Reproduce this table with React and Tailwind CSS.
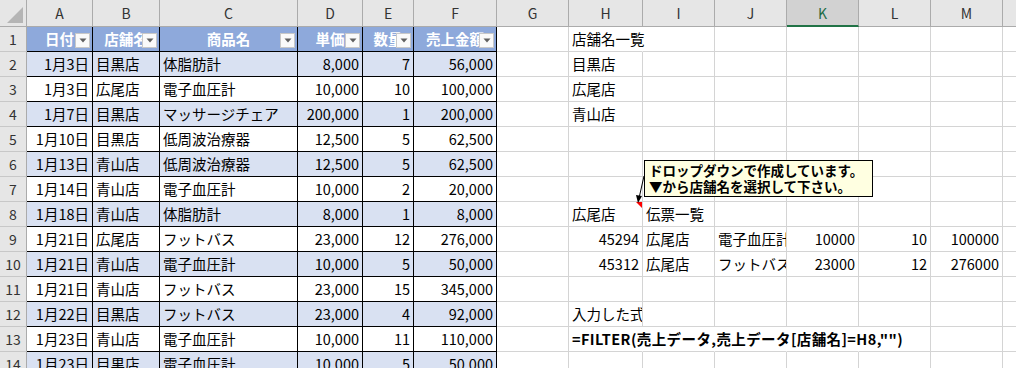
import React from 'react';

const COLS = ['A','B','C','D','E','F','G','H','I','J','K','L','M','N'];

const DATA = [
  ['1月3日','目黒店','体脂肪計','8,000','7','56,000'],
  ['1月3日','広尾店','電子血圧計','10,000','10','100,000'],
  ['1月7日','目黒店','マッサージチェア','200,000','1','200,000'],
  ['1月10日','目黒店','低周波治療器','12,500','5','62,500'],
  ['1月13日','青山店','低周波治療器','12,500','5','62,500'],
  ['1月14日','青山店','電子血圧計','10,000','2','20,000'],
  ['1月18日','青山店','体脂肪計','8,000','1','8,000'],
  ['1月21日','広尾店','フットバス','23,000','12','276,000'],
  ['1月21日','青山店','電子血圧計','10,000','5','50,000'],
  ['1月21日','青山店','フットバス','23,000','15','345,000'],
  ['1月22日','目黒店','フットバス','23,000','4','92,000'],
  ['1月23日','青山店','電子血圧計','10,000','11','110,000'],
  ['1月23日','目黒店','電子血圧計','10,000','5','50,000'],
];

const HEADERS = ['日付','店舗名','商品名','単価','数量','売上金額'];
const NUMERIC = [true, false, false, true, true, true];

// right side cells: [text, align('l'|'r'), bold, overflow]
const SIDE = {
  H1: ['店舗名一覧','l',false,true],
  H2: ['目黒店','l'],
  H3: ['広尾店','l'],
  H4: ['青山店','l'],
  H8: ['広尾店','l'],
  I8: ['伝票一覧','l'],
  H9: ['45294','r'],
  I9: ['広尾店','l'],
  J9: ['電子血圧計','l'],
  K9: ['10000','r'],
  L9: ['10','r'],
  M9: ['100000','r'],
  H10: ['45312','r'],
  I10: ['広尾店','l'],
  J10: ['フットバス','l'],
  K10: ['23000','r'],
  L10: ['12','r'],
  M10: ['276000','r'],
  H12: ['入力した式','l'],
  H13: ['=FILTER(売上データ,売上データ[店舗名]=H8,"")','l',true,true],
};

// cells whose right gridline is hidden by overflowing text
const HIDE_RIGHT = new Set(['H1','H13','I13','J13','K13']);

function FilterButton() {
  return (
    <span className="absolute right-[2px] bottom-[3px] w-[15px] h-[15px] bg-[#fafafa] border border-[#c8c8c8] flex items-center justify-center">
      <svg width="8" height="5" viewBox="0 0 8 5"><path d="M0.5 0.5 L7.5 0.5 L4 4.5 Z" fill="#606060" /></svg>
    </span>
  );
}

function ColumnHeader({ letter }) {
  if (letter === 'K') {
    return (
      <div className="flex items-center justify-center bg-[#d2d2d2] border-r border-[#ababab] border-b-2 border-b-[#217346] text-[#1d6b45] text-[14px]">
        {letter}
      </div>
    );
  }
  return (
    <div className="flex items-center justify-center bg-[#e6e6e6] border-r border-b border-[#ababab] text-[#333333] text-[14px]">
      {letter}
    </div>
  );
}

function RowHeader({ n }) {
  return (
    <div className="flex items-center justify-center bg-[#e6e6e6] border-r border-r-[#ababab] border-b border-b-[#c8c8c8] text-[#333333] text-[14px]">
      {n}
    </div>
  );
}

function TableCell({ row, col }) {
  if (row === 1) {
    return (
      <div className="relative overflow-hidden flex items-center justify-center bg-[#8ea9db] border-r border-b border-black text-white font-bold whitespace-nowrap">
        <span>{HEADERS[col]}</span>
        <FilterButton />
      </div>
    );
  }
  const text = DATA[row - 2][col];
  const band = row % 2 === 0;
  const num = NUMERIC[col];
  return (
    <div
      className={
        'overflow-hidden flex items-center whitespace-nowrap border-r border-b border-black ' +
        (band ? 'bg-[#d9e1f2] ' : 'bg-white ') +
        (num ? 'justify-end pr-[3px]' : 'justify-start pl-[3px]')
      }
    >
      {text}
    </div>
  );
}

function SideCell({ row, letter }) {
  const key = letter + row;
  const c = SIDE[key];
  const hide = HIDE_RIGHT.has(key);
  const base =
    'flex items-center whitespace-nowrap border-b border-b-[#d4d4d4] border-r ' +
    (hide ? 'border-r-transparent ' : 'border-r-[#d4d4d4] ');
  if (!c) return <div className={base} />;
  const [text, align, bold, overflow] = c;
  return (
    <div
      className={
        base +
        (overflow ? 'overflow-visible ' : 'overflow-hidden ') +
        (align === 'r' ? 'justify-end pr-[3px] ' : 'justify-start pl-[3px] ') +
        (bold ? 'font-bold tracking-[0.4px]' : '')
      }
    >
      <span className="relative z-10">{text}</span>
    </div>
  );
}

export default function App() {
  const rows = [];
  for (let r = 1; r <= 14; r++) {
    rows.push(<RowHeader key={'rh' + r} n={r} />);
    COLS.forEach((L, i) => {
      if (i < 6) rows.push(<TableCell key={L + r} row={r} col={i} />);
      else rows.push(<SideCell key={L + r} row={r} letter={L} />);
    });
  }

  return (
    <div className="relative w-[1016px] h-[368px] overflow-hidden bg-white text-black text-[14.5px] leading-none font-['Noto_Sans_CJK_JP',sans-serif]">
      <div className="grid w-[1075px] grid-cols-[27px_66px_67px_138px_65px_51px_83px_72px_74px_72px_72px_72px_72px_72px_72px] grid-rows-[27px_repeat(14,25px)]">
        <div className="bg-[#e6e6e6] border-r border-b border-[#ababab] flex items-end justify-end p-[3px]">
          <svg width="16" height="16" viewBox="0 0 16 16"><path d="M16 0 L16 16 L0 16 Z" fill="#b5b5b5" /></svg>
        </div>
        {COLS.map((L) => (
          <ColumnHeader key={'ch' + L} letter={L} />
        ))}
        {rows}
      </div>

      {/* comment pointer + red indicator */}
      <svg className="absolute left-0 top-0 pointer-events-none" width="1016" height="368">
        <polygon points="636,202 642,202 642,208" fill="#ff0000" />
        <line x1="644" y1="176" x2="639.5" y2="196" stroke="#000" strokeWidth="1" />
        <polygon points="636,195 642,196 638,203" fill="#000" />
      </svg>

      {/* comment box */}
      <div className="absolute left-[644px] top-[160px] w-[229px] h-[37px] bg-[#ffffe1] border border-black pl-[4px] pt-[1px] text-[13.5px] font-bold leading-[16px] text-black whitespace-nowrap">
        <div>ドロップダウンで作成しています。</div>
        <div>▼から店舗名を選択して下さい。</div>
      </div>
    </div>
  );
}
